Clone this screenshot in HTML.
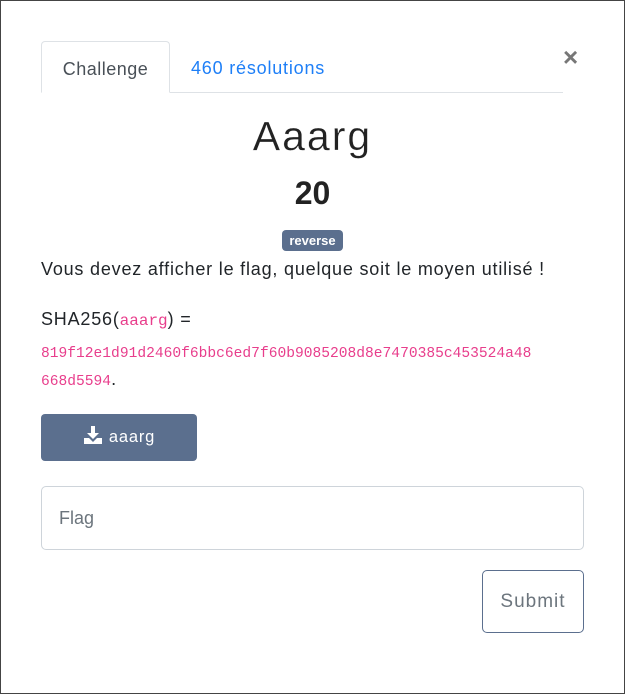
<!DOCTYPE html>
<html><head><style>
*{box-sizing:border-box;margin:0;padding:0}
html,body{width:625px;height:694px;overflow:hidden;background:#fff}
body{font-family:"Liberation Sans",sans-serif;color:#212529;position:relative;border:1px solid #444;}
.a{position:absolute;margin-left:-1px;margin-top:-1px}
.tabs{left:41px;top:41px;width:522px;height:52px;border-bottom:1px solid #dee2e6}
.tab1{position:absolute;left:0;top:0;width:129px;height:52px;border:1px solid #dee2e6;border-bottom:1px solid #fff;border-radius:4px 4px 0 0;background:#fff;font-size:18px;color:#495057;text-align:center;line-height:54px;letter-spacing:0.5px}
.tab2{position:absolute;left:150px;top:0;line-height:54px;font-size:18px;color:#1e7ff7;letter-spacing:0.8px}
.x{left:563px;top:42px;font-size:26px;font-weight:bold;color:#777}
.title{left:0;width:625px;top:113px;text-align:center;font-size:41px;letter-spacing:2px;color:#222;-webkit-text-stroke:0.3px #fff}
.pts{left:0;width:625px;top:175px;text-align:center;font-size:32px;font-weight:bold;color:#222}
.badge{left:282px;top:230px;width:61px;height:21px;background:#5b6f8e;border-radius:4px;color:#fff;font-size:13px;font-weight:bold;text-align:center;line-height:21px}
.p{left:41px;font-size:18px;color:#212529;letter-spacing:0.8px}
.mono{font-family:"Liberation Mono",monospace;color:#e83e8c;font-size:14.6px;letter-spacing:0}
.btn{left:41px;top:414px;width:156px;height:47px;background:#5b6f8e;border-radius:4px;color:#fff;font-size:16.5px;line-height:47px;text-align:center;letter-spacing:0.8px}
.inp{left:41px;top:486px;width:543px;height:64px;border:1px solid #ced4da;border-radius:5px;font-size:18px;color:#6c757d;padding-left:17px;line-height:62px}
.sub{left:482px;top:570px;width:102px;height:63px;border:1px solid #5b6f8e;border-radius:5px;font-size:19px;color:#6c757d;text-align:center;line-height:61px;letter-spacing:1px}
</style></head><body>
<div class="a tabs"><div class="tab1">Challenge</div><div class="tab2">460 résolutions</div></div>
<div class="a x">×</div>
<div class="a title">Aaarg</div>
<div class="a pts">20</div>
<div class="a badge">reverse</div>
<div class="a p" style="top:259px">Vous devez afficher le flag, quelque soit le moyen utilisé !</div>
<div class="a p" style="top:309px">SHA256(<span class="mono" style="font-size:16px">aaarg</span>) =</div>
<div class="a p" style="top:341px"><span class="mono">819f12e1d91d2460f6bbc6ed7f60b9085208d8e7470385c453524a48</span></div>
<div class="a p" style="top:369px"><span class="mono">668d5594</span>.</div>
<div class="a btn"><svg width="20" height="20" viewBox="0 0 20 20" style="vertical-align:-3px;margin-right:6px"><path d="M8 1h4v7h4l-6 6-6-6h4z" fill="#fff"/><path d="M1 13h5l4 4 4-4h5v6H1z" fill="#fff"/></svg>aaarg</div>
<div class="a inp">Flag</div>
<div class="a sub">Submit</div>
</body></html>
